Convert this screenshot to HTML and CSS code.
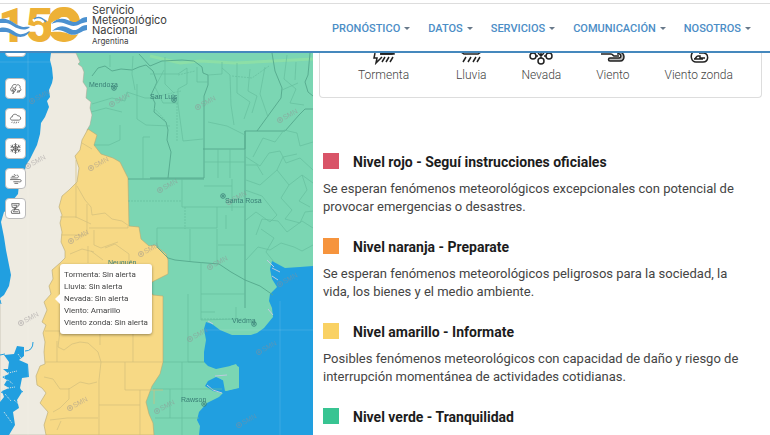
FILE: index.html
```html
<!DOCTYPE html>
<html lang="es">
<head>
<meta charset="utf-8">
<meta name="viewport" content="width=device-width, initial-scale=1">
<title>Servicio Meteorológico Nacional</title>
<link rel="stylesheet" href="styles.css">
</head>
<body>
<header class="header">
  <a class="brand" href="#">
    <svg class="logo" viewBox="0 0 88 40" aria-hidden="true">
      <text class="logo-digits" x="-2" y="36">15</text>
      <rect class="logo-ring" x="53" y="6" width="22" height="25" rx="10"/>
      <path fill="#fff" d="M0 13C9 11 15 19 22 21C25 22 28 20 31 22C27 28 22 30 14 27C8 23 5 24 0 24Z"/>
      <path fill="#4b91d0" d="M0 13C9 11 14 18 20 20C24 22 27 20 30 21C26 25 19 24 13 20C8 16 4 17 0 17ZM0 22C9 20 13 26 19 28C24 29 27 26 30 25C26 32 19 32 13 29C8 25 4 26 0 26Z"/>
      <path fill="none" stroke="#fff" stroke-width="3" d="M33 15Q38 11 44 16"/>
      <path fill="none" stroke="#4b91d0" stroke-width="1.500" d="M34 13Q40 9 46 16"/>
      <path fill="#fff" d="M51 17C61 9 68 15 74 17C80 17 82 11 87 12V26C79 26 78 31 69 28C62 25 57 26 51 26Z"/>
      <path fill="#4b91d0" d="M51 18C60 9 67 14 73 16C79 17 80 11 87 11V16C79 17 77 22 69 19C62 16 58 15 51 18ZM52 25C62 16 68 22 73 24C79 25 80 19 87 19V24C80 25 77 31 69 28C62 24 58 23 52 25Z"/>
    </svg>
    <span class="brand-name">Servicio<br>Meteorológico<br>Nacional<br><small>Argentina</small></span>
  </a>
  <nav class="nav">
    <a href="#">PRONÓSTICO</a>
    <a href="#">DATOS</a>
    <a href="#">SERVICIOS</a>
    <a href="#">COMUNICACIÓN</a>
    <a href="#">NOSOTROS</a>
  </nav>
</header>
<main class="main">
  <section class="map" aria-label="Mapa de alertas">
    <svg class="map-canvas" viewBox="0 53 313 382" preserveAspectRatio="xMinYMin slice">
      <defs>
        <g id="mark"><circle r="2.500"/><path d="M0-1.500V1M-1 0H1"/><text x="4" y="2" transform="rotate(-28)">SMN</text></g>
        <g id="city"><circle r="2.300"/><circle r=".8"/></g>
      </defs>
      <path class="green" d="M0 53H313V435H0Z"/>
      <path class="land" d="M0 53H76L80 62L78 64L82 67L84 72L83 82L87 88L86 98L91 102L90 108L92 115L90 125L87 130L92 150L100 200V435H0Z"/>
      <path class="water" d="M0 53H51L50 60L52 68L53 78L52 83L49 90L50 97L47 101L49 107L45 117L41 123L40 134L37 145L33 153L30 159L26 165L24 175L19 184L18 194L13 200L11 208L4 212L1 222L4 237L6 250L11 275L9 286L4 295L0 298Z"/>
      <path class="yellow" d="M88 129L97 135L94 145L101 154L113 158L120 162L128 178L129 226L139 227L141 239L149 246L155 245L166 254L168 260L168 274L154 281L146 286L153 295L163 296V362L160 374L152 386L146 402L149 414L153 423L154 435H46L44 425L48 412L40 403L46 393L42 388L37 385L36 376L40 366L45 364L44 352L45 342L43 333L46 325L42 322L47 310L44 302L51 294L49 286L53 279L52 270L60 263L65 258L65 251L61 242L62 232L60 223L62 215L59 207L62 196L69 190L77 182L79 168L75 156L80 150L82 140Z"/>
      <path class="water" d="M313 266L300 267L285 268L272 261L270 269L272 279L277 287L270 294L269 301L272 308L273 317L264 328L257 333L251 335H232L220 330L212 324L206 322L204 329L206 340L204 352L204 362L208 366L216 369L235 365L239 367L239 382L237 388L225 391L223 380L216 377L208 381L205 386L213 391L223 393L219 397L207 403L199 412L197 420L200 426L199 435H313Z"/>
      <path class="green" d="M223 370L228 369L230 366L236 364L239 369V380V388L226 391L224 381L216 376H227V371Z"/>
      <path class="foam" d="M215 376L227 375M207 385L213 390L222 393M208 321L213 324M267 260L274 267M272 268L280 272M272 276L278 280M268 309L273 315"/>
      <path class="water" d="M4 355L14 354L17 346L24 347V356L19 360L28 364L29 377L22 378L20 388L22 392L17 400L19 408L13 412L15 425L9 435H0V402L4 397L2 391L9 388L4 385L7 380L2 377L9 374L3 369H8L9 362Z"/>
      <g class="speckle"><path d="M0 377H5M3 382L8 380L13 384M2 389L15 387M8 373L17 371M14 400L20 405M4 412L12 423M18 354L23 361M5 394L11 401"/></g>
      <path class="spray" d="M25 351Q33 351 33 342M27 365V377M0 355L5 354M1 392L5 394M20 390L23 392M0 300L1 304"/>
      <path class="lawn" d="M150 56L180 63L200 61L235 63L313 59"/>
      <g class="province">
        <path d="M92 76L98 68L105 66L112 71L121 69L132 70L139 67L146 65L153 71L157 82L151 95L155 103L154 112L166 122L168 130L167 140L171 152L168 178M139 54L150 66L162 61L182 60L194 61L202 67L203 73L208 75V85L204 96V178H150M203 149H245V131H285L299 115L305 109L313 109M272 53L275 71L282 88L281 98L257 131M245 131V308M310 53L308 75L305 82L308 92L313 96"/>
        <path d="M128 179H204M157 247L168 258L175 260L194 262L219 264L231 272L245 280L260 286L273 295"/>
      </g>
      <g class="lines">
        <path d="M92 104L112 98L125 101L127 92L145 98H160M91 112L106 108L122 112M137 84V119L146 125L170 126M120 125V140L109 145H94M143 137V179M143 137H150M133 56L132 74L135 90M110 55V67M165 57V84L174 93M150 74H178L187 68V84L178 89L178 104L183 141L203 139M197 67V82L208 82M164 70L155 87L163 103H178"/>
        <path d="M208 75L222 74V62M222 68L230 75L231 105L234 125M208 122L227 126L245 135M237 63V93L250 102L244 119M250 69L248 91L257 96L252 113M265 67L260 94L268 117M287 55L284 79L296 89L290 103L304 105M282 90L298 83M296 62L295 80M218 149V178M230 149V178M204 162H245M253 157L263 138L275 142L284 130L297 133L300 146L313 142M246 157L260 166L269 153L280 151L286 163L300 158L313 170"/>
        <path d="M182 179V207H245M204 186H232V179M232 186V211M226 215V229M245 190L262 196L277 215L270 222L256 212L246 220M157 228H217V207M190 229V261M217 229V264M218 245H245M157 228V248M201 262V294H245M201 294V320L236 319V307M188 294V362H204M201 312H215M163 362H204M182 362V389M153 389H222M170 389V418H199M182 389V435M155 418H170M261 229L274 238L266 252L274 262M256 235L262 219L278 221L287 232L302 221L313 228M246 180L260 185L277 170L289 185L302 175L313 183M277 170L283 157L297 154M289 185L281 198L292 210L285 219L300 223L305 212L313 211M302 175L307 190L299 201L310 207M245 165H257L263 175M246 260L258 247L270 250L281 243L294 247L302 251L313 245"/>
        <path class="dash" d="M150 98L181 91M178 75L195 71M154 108L165 120M177 103V142M232 76L252 78L269 66M201 319H245M185 207V229M128 201H182"/>
      </g>
      <g class="soil-lines">
        <path d="M77 186L85 200L91 207L92 215L105 213L112 219L122 221L129 226M76 160V218M87 204V235H61M60 217H76L91 224M89 228H128V226M94 230V245L101 248L118 242M70 254L82 249L94 252M91 251L103 260M105 248L115 244L129 254V261M82 143L92 149M88 246V263M45 331H60L58 347L64 350L72 344L80 342L88 343L98 352L101 362L99 380V435M57 341V362M45 362H163M100 334V345M133 334V362M125 362V390H163M99 405H140V435M154 390V404M44 377L53 379L60 389H69L80 382L89 384L97 382M69 388V399L60 408L53 412M50 420L67 418H98M140 390V405M146 297V334M61 421L57 430"/>
      </g>
      <g class="seam"><path d="M0 62H52M280 301V435M204 330H313M28 53V435"/></g>
      <g class="marks">
        <use href="#mark" x="32" y="101"/><use href="#mark" x="112" y="104"/><use href="#mark" x="198" y="107"/><use href="#mark" x="280" y="120"/>
        <use href="#mark" x="28" y="166"/><use href="#mark" x="91" y="168"/><use href="#mark" x="160" y="190"/><use href="#mark" x="229" y="202"/>
        <use href="#mark" x="71" y="241"/><use href="#mark" x="141" y="254"/><use href="#mark" x="210" y="267"/><use href="#mark" x="280" y="284"/>
        <use href="#mark" x="21" y="323"/><use href="#mark" x="107" y="326"/><use href="#mark" x="190" y="339"/><use href="#mark" x="259" y="352"/>
        <use href="#mark" x="70" y="408"/><use href="#mark" x="157" y="411"/><use href="#mark" x="239" y="425"/>
      </g>
      <g class="cities">
        <use href="#city" x="114" y="88"/><text x="89" y="87">Mendoza</text>
        <use href="#city" x="174" y="100"/><text x="150" y="99">San Luis</text>
        <use href="#city" x="223" y="196"/><text x="225" y="203">Santa Rosa</text>
        <text x="108" y="265">Neuquén</text>
        <use href="#city" x="254" y="324"/><text x="232" y="323">Viedma</text>
        <use href="#city" x="204" y="404"/><text x="181" y="402">Rawson</text>
      </g>
    </svg>
    <div class="tools">
      <button aria-label="Alertas"></button>
      <button aria-label="Tormenta"><svg viewBox="0 0 24 24"><path d="M7 17C2 18 2 10 6 10C5 5 11 3 14 6C18 3 22 8 20 11C24 14 21 18 17 17M9 10L6 16H9L7 22L13 14H10L13 8M17 15L15 20M20 15L18 20"/></svg></button>
      <button aria-label="Lluvia"><svg viewBox="0 0 24 24"><path d="M6 15C1 15 2 9 6 9C6 3 14 3 16 7C22 6 24 15 18 15ZM6 18L5 20M10 18L9 21M14 18L13 21M18 18L17 20"/></svg></button>
      <button aria-label="Nevada"><svg viewBox="0 0 24 24"><path d="M12 2V22M3 7L21 17M21 7L3 17M9 4L12 7L15 4M9 20L12 17L15 20M3 10L7 9L6 5M18 5L17 9L21 10M3 14L7 15L6 19M18 19L17 15L21 14"/><circle cx="12" cy="12" r="4"/></svg></button>
      <button aria-label="Viento"><svg viewBox="0 0 24 24"><path d="M3 11H14C19 11 18 5 14 6M2 14H20C24 14 23 20 18 18H8M5 8H10C13 8 12 4 9 5M10 21H17"/></svg></button>
      <button aria-label="Viento zonda"><svg viewBox="0 0 24 24"><path d="M5 3H19L18 7L10 14H18L20 21H5L4 17L12 10H6ZM8 6H15L8 18H17"/></svg></button>
    </div>
    <div class="tooltip" role="tooltip">Tormenta: Sin alerta<br>Lluvia: Sin alerta<br>Nevada: Sin alerta<br>Viento: Amarillo<br>Viento zonda: Sin alerta</div>
  </section>
  <section class="info">
    <ul class="phenomena">
      <li><svg viewBox="0 0 24 12"><path fill="#bbb" d="M9 0H22V1H9Z"/><path d="M3 0L2 5H5L4 10L10 4M8 1H20L22-1M13 4L10 9M17 4L14 9M21 4L18 9"/></svg>Tormenta</li>
      <li><svg viewBox="0 0 24 12"><path d="M2-1L5 1H19L22-1M7 4L4 9M12 4L9 9M17 4L14 9M21 4L18 9"/></svg>Lluvia</li>
      <li><svg viewBox="0 0 24 12"><circle cx="4" cy="3" r="3"/><circle cx="20" cy="3" r="3"/><circle cx="12" cy="8" r="3"/><path d="M7 3H9M15 3H17M12 0V5M9 0L12 3L15 0"/></svg>Nevada</li>
      <li><svg viewBox="0 0 24 12"><path fill="#bbb" d="M9 5H18C21 5 20 0 17 1V-1C24-2 25 8 19 8H9C7 8 7 5 9 5Z"/><path d="M0 1H10C12 1 12 3 13 3H18"/></svg>Viento</li>
      <li><svg viewBox="0 0 24 12"><path d="M6-1C3 2 4 9 9 9H16C22 9 22 1 17 0H12M7 6C9 6 9 3 11 3H13V5H18M8 6H16"/></svg>Viento zonda</li>
    </ul>
    <article class="level">
      <h2 class="red">Nivel rojo - Seguí instrucciones oficiales</h2>
      <p>Se esperan fenómenos meteorológicos excepcionales con potencial de provocar emergencias o desastres.</p>
    </article>
    <article class="level">
      <h2 class="orange">Nivel naranja - Preparate</h2>
      <p>Se esperan fenómenos meteorológicos peligrosos para la sociedad, la vida, los bienes y el medio ambiente.</p>
    </article>
    <article class="level">
      <h2 class="amber">Nivel amarillo - Informate</h2>
      <p>Posibles fenómenos meteorológicos con capacidad de daño y riesgo de interrupción momentánea de actividades cotidianas.</p>
    </article>
    <article class="level">
      <h2 class="safe">Nivel verde - Tranquilidad</h2>
    </article>
  </section>
</main>
</body>
</html>
```
FILE: styles.css
```css
* { box-sizing: border-box; }
body {
  margin: 0;
  height: 100vh;
  display: flex;
  flex-direction: column;
  overflow: hidden;
  background: #fff;
  color: #444;
  font-family: Roboto, "Liberation Sans", sans-serif;
}
.header {
  flex: none;
  display: flex;
  justify-content: space-between;
  margin-top: 3px;
  border-top: 1px solid #ddd;
  border-bottom: 2px solid #4588bd;
}
.brand {
  display: flex;
  gap: 4px;
  padding-bottom: 5px;
  color: #3c3c3c;
  text-decoration: none;
}
.logo { width: 88px; height: 40px; margin-top: 2px; overflow: visible; }
.logo-digits {
  fill: #edb137;
  font: 900 48px Roboto, sans-serif;
}
.logo-ring { fill: none; stroke: #edb137; stroke-width: 10; }
.brand-name {
  font: 11px/10px Inter, sans-serif;
  padding-top: 1px;
}
.brand-name small { font-size: 8px; }
.nav {
  display: flex;
  align-items: center;
  gap: 18px;
  padding: 2px 19px 0 0;
}
.nav a {
  display: flex;
  align-items: center;
  gap: 4px;
  color: #4b8dc6;
  font-size: 11px;
  font-weight: 500;
  text-decoration: none;
}
.nav a::after {
  content: "";
  border: 3px solid transparent;
  border-top-color: #68798a;
  border-bottom: 0;
}
.main {
  flex: 1;
  min-height: 0;
  display: grid;
  grid-template-columns: 313fr 457fr;
}
.map { position: relative; overflow: hidden; }
.map-canvas { display: block; width: 100%; height: 100%; }
.green { fill: #7bd6b3; }
.land { fill: #eeebe1; stroke: #aaa391; stroke-width: .5; }
.water { fill: #219fe0; }
.yellow { fill: #f7d985; stroke: #b7a772; stroke-width: .6; }
.foam, .spray, .lawn, .seam, .speckle, .lines, .soil-lines, .province { fill: none; }
.foam { stroke: #bfc9df; stroke-width: 1; }
.spray { stroke: #219fe0; }
.speckle { stroke: #e2e7e2; stroke-width: 1; stroke-dasharray: 1 1; }
.lawn { stroke: #9ee79b; stroke-width: 3; opacity: .5; }
.seam { stroke: #fff; opacity: .12; }
.province { stroke: #55a88c; stroke-width: .9; }
.lines { stroke: #65bf9e; stroke-width: .7; }
.dash { stroke-dasharray: 2 1; }
.soil-lines { stroke: #d3bf7c; stroke-width: .7; }
.marks {
  fill: none;
  stroke: #928d91;
  stroke-width: 1;
  opacity: .5;
  font: 7px "Liberation Sans", sans-serif;
}
.marks text, #mark text { fill: #928d91; stroke: none; }
.cities {
  fill: #397e75;
  font: 7px "Liberation Sans", sans-serif;
}
.cities circle, #city circle { fill: none; stroke: #397e75; stroke-width: .8; }
.tools {
  position: absolute;
  top: -17px;
  left: 5px;
  display: grid;
  gap: 9px;
}
.tools button {
  display: grid;
  place-items: center;
  width: 21px;
  height: 21px;
  padding: 0;
  border: 1px solid #bbb;
  border-radius: 4px;
  background: #fff;
}
.tools button:first-child { margin-bottom: 12px; }
.tools svg { width: 13px; height: 13px; }
.tools path, .tools circle { fill: none; stroke: #555; stroke-width: 1.5; }
.tooltip {
  position: absolute;
  top: 211px;
  left: 60px;
  padding: 5px 4px;
  border-radius: 3px;
  background: #fffefd;
  box-shadow: 0 1px 3px #0006;
  font-size: 8px;
  line-height: 12px;
  white-space: nowrap;
}
.tooltip::before {
  content: "";
  position: absolute;
  top: 30px;
  left: -5px;
  border: 5px solid transparent;
  border-right-color: #fffefd;
  border-left: 0;
}
.info { padding: 0 8px 0 6px; overflow: hidden; }
.phenomena {
  display: flex;
  justify-content: space-between;
  margin: 0 0 55px;
  padding: 0 28px 14px 38px;
  border: 1px solid #ddd;
  border-top: 0;
  border-radius: 0 0 4px 4px;
  list-style: none;
  font-size: 12px;
  font-weight: 300;
  line-height: 16px;
}
.phenomena li { display: grid; justify-items: center; gap: 2px; }
.phenomena li:first-child { margin-right: 12px; }
.phenomena svg { width: 24px; height: 12px; }
.phenomena path, .phenomena circle { stroke: #222; stroke-width: 1.500; }
.phenomena path:not([fill]), .phenomena circle { fill: none; }
.level { padding: 0 16px 0 4px; margin-bottom: 22px; }
.level h2 {
  display: flex;
  align-items: center;
  gap: 14px;
  margin: 0 0 9px;
  color: #1c1c1c;
  font-size: 14px;
  font-weight: 700;
  line-height: 18px;
}
.level h2::before { content: ""; width: 16px; height: 16px; margin-bottom: 2px; }
.red::before { background: #d95468; }
.orange::before { background: #f6943d; }
.amber::before { background: #f9d163; }
.safe::before { background: #38c492; }
.level p { margin: 0; font-size: 13px; line-height: 18px; }
```
